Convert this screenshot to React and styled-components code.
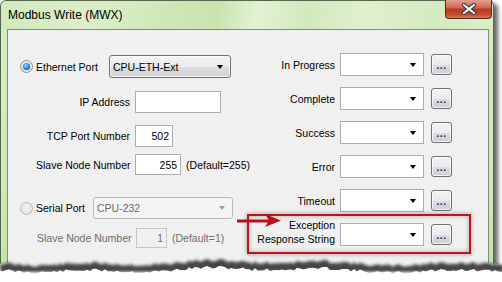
import React from 'react';
import styled, { createGlobalStyle } from 'styled-components';

const GlobalStyle = createGlobalStyle`
  html, body { margin: 0; padding: 0; background: #fff; }
  body { font-family: "Liberation Sans", Arial, sans-serif; font-size: 10.5px; color: #000; }
`;

const Page = styled.div`
  position: relative;
  width: 502px;
  height: 282px;
  overflow: hidden;
  background: #fff;
`;

const Window = styled.div`
  width: 494px;
  height: 276px;
  box-sizing: border-box;
  border: 1px solid #55664f;
  border-bottom: none;
  border-radius: 6px 6px 0 0;
  background: linear-gradient(to bottom, #d6ecc3 0%, #d2eabd 60%, #c4e3a4 100%);
  box-shadow: 4px 3px 4px rgba(0, 0, 0, 0.6);
  display: flex;
  flex-direction: column;
`;

const TitleBar = styled.div`
  height: 28px;
  display: flex;
  align-items: flex-start;
  padding-left: 7px;
  border-radius: 5px 5px 0 0;
  background: linear-gradient(100deg, #d2e9bc 0%, #dcefca 18%, #d0e8b9 32%, #c9e4af 44%,
    #e2f2d3 52%, #d2e9bc 62%, #dff0ce 74%, #d4eabf 88%, #dbeec9 100%);
`;

const Title = styled.div`
  font-size: 12px;
  line-height: 28px;
  color: #000;
`;

const CloseButton = styled.div`
  margin-left: auto;
  margin-right: 1px;
  margin-top: -1px;
  width: 47px;
  height: 19px;
  box-sizing: border-box;
  border: 1px solid #5b2a1e;
  border-top: none;
  border-radius: 0 0 4px 4px;
  background: linear-gradient(to bottom, #e3a08f 0%, #cf6a52 42%, #b8391f 52%, #c44a2e 80%, #d8785c 100%);
  display: flex;
  align-items: center;
  justify-content: center;
`;

const Frame = styled.div`
  flex: 1;
  display: flex;
  padding: 0 4px 0 6px;
`;

const Client = styled.div`
  flex: 1;
  border: 1px solid #7f8e7b;
  background: #f0f0f0;
`;

const Columns = styled.div`
  display: flex;
  padding-top: 23px;
`;

const LeftCol = styled.div`
  margin-left: 12px;
  width: 230px;
  display: flex;
  flex-direction: column;
`;

const RightCol = styled.div`
  display: flex;
  flex-direction: column;
  gap: 11px;
`;

const PortRow = styled.div`
  display: flex;
  align-items: center;
  margin-top: ${(p) => p.$mt}px;
  white-space: nowrap;
`;

const Radio = styled.span`
  width: 13px;
  height: 13px;
  box-sizing: border-box;
  border-radius: 50%;
  border: 1px solid ${(p) => (p.$disabled ? '#b8b8b8' : '#8a8f93')};
  background: ${(p) =>
    p.$disabled
      ? 'radial-gradient(circle at 50% 40%, #f4f4f4, #dcdcdc)'
      : 'radial-gradient(circle at 50% 40%, #ffffff, #d6dbe0)'};
  display: flex;
  align-items: center;
  justify-content: center;
  margin-right: 3px;
  &::after {
    content: '';
    display: ${(p) => (p.$checked ? 'block' : 'none')};
    width: 7px;
    height: 7px;
    border-radius: 50%;
    background: radial-gradient(circle at 40% 35%, #9fd8ff, #2d7bd0 55%, #144a8e);
    box-shadow: 0 0 1px #3a6fb0;
  }
`;

const PortLabel = styled.span`
  width: ${(p) => p.$w}px;
  color: ${(p) => (p.$disabled ? '#6d6d6d' : '#000')};
`;

const Select = styled.div`
  width: ${(p) => p.$w}px;
  height: ${(p) => p.$h}px;
  box-sizing: border-box;
  border: 1px solid ${(p) => (p.$disabled ? '#b9bcbf' : '#707070')};
  border-radius: 3px;
  background: ${(p) =>
    p.$disabled
      ? '#f4f4f4'
      : 'linear-gradient(to bottom, #f3f3f3 0%, #ebebeb 50%, #dddddd 51%, #d3d3d3 100%)'};
  display: flex;
  align-items: center;
  padding: 0 7px 0 3px;
  color: ${(p) => (p.$disabled ? '#6d6d6d' : '#000')};
  box-shadow: inset 0 0 0 1px ${(p) => (p.$disabled ? 'transparent' : 'rgba(255,255,255,0.7)')};
`;

const SelectText = styled.span`
  flex: 1;
`;

const Arrow = styled.span`
  width: 0;
  height: 0;
  border-left: 3.5px solid transparent;
  border-right: 3.5px solid transparent;
  border-top: 4px solid ${(p) => (p.$disabled ? '#a0a0a0' : '#000')};
`;

const FieldRow = styled.div`
  display: flex;
  align-items: center;
  margin-top: ${(p) => p.$mt}px;
  padding-left: ${(p) => (p.$disabled ? 17 : 16)}px;
  white-space: nowrap;
  color: ${(p) => (p.$disabled ? '#6d6d6d' : '#000')};
`;

const FieldLabel = styled.span`
  width: 94px;
  text-align: right;
  margin-right: 5px;
`;

const TextBox = styled.div`
  width: ${(p) => p.$w}px;
  height: ${(p) => p.$h}px;
  box-sizing: border-box;
  border: 1px solid ${(p) => (p.$disabled ? '#c6c6c6' : '#abadb3')};
  background: ${(p) => (p.$disabled ? '#f0f0f0' : '#fff')};
  display: flex;
  align-items: center;
  justify-content: flex-end;
  padding-right: 3px;
  margin-right: 5px;
`;

const ActionRow = styled.div`
  position: relative;
  display: flex;
  align-items: center;
  white-space: nowrap;
`;

const ActionLabel = styled.div`
  width: 85px;
  margin-right: 5px;
  display: flex;
  flex-direction: column;
  align-items: flex-end;
  line-height: 14px;
  margin-top: ${(p) => (p.$twoLine ? -6 : 0)}px;
`;

const Combo = styled.div`
  width: 84px;
  height: 23px;
  box-sizing: border-box;
  border: 1px solid #abadb3;
  background: #fff;
  display: flex;
  align-items: center;
  justify-content: flex-end;
  padding-right: 7px;
  margin-right: 7px;
`;

const DotsButton = styled.div`
  width: 21px;
  height: 21px;
  box-sizing: border-box;
  border: 1px solid #707070;
  border-radius: 3px;
  background: linear-gradient(to bottom, #f2f2f2 0%, #ebebeb 50%, #dddddd 51%, #cfcfcf 100%);
  box-shadow: inset 0 0 0 1px rgba(255, 255, 255, 0.75);
  display: flex;
  align-items: flex-end;
  justify-content: center;
  padding-bottom: 4px;
  font-size: 10px;
  line-height: 8px;
  letter-spacing: 0.5px;
  color: #1d1d6e;
  font-weight: bold;
`;

const Highlight = styled.div`
  position: absolute;
  left: -3px;
  top: -9px;
  width: 224px;
  height: 40px;
  box-sizing: border-box;
  border: 2px solid #c0121b;
  box-shadow: 0 0 5px rgba(0, 0, 0, 0.35), inset 0 0 5px rgba(0, 0, 0, 0.3);
  pointer-events: none;
`;

const Pointer = styled.svg`
  position: absolute;
  left: -13px;
  top: -10px;
`;

const Tear = styled.svg`
  position: absolute;
  left: 0;
  top: 248px;
`;

const tearPoints = (() => {
  let seed = 11;
  const rnd = () => {
    seed = (seed * 9301 + 49297) % 233280;
    return seed / 233280;
  };
  const pts = [];
  for (let x = 0; x <= 504; x += 3) {
    const y = 15 + Math.sin(x / 19) * 1.4 + Math.sin(x / 53) * 1.6 + (rnd() - 0.5) * 3.2;
    pts.push(`${x},${y.toFixed(1)}`);
  }
  return pts;
})();

const tearFill = `M0,0 L${tearPoints.join(' L')} L504,40 L0,40 Z`;
const tearShadow = `M${tearPoints.join(' L')} L504,24 L0,24 Z`;

const actions = ['In Progress', 'Complete', 'Success', 'Error', 'Timeout'];

const App = () => (
  <Page>
    <GlobalStyle />
    <Window>
      <TitleBar>
        <Title>Modbus Write (MWX)</Title>
        <CloseButton>
          <svg width="16" height="12" viewBox="0 0 16 12">
            <path d="M3 2 L13 10 M13 2 L3 10" stroke="#3a3a3a" strokeWidth="4.2" strokeLinecap="round" />
            <path d="M3 2 L13 10 M13 2 L3 10" stroke="#fff" strokeWidth="2.2" strokeLinecap="round" />
          </svg>
        </CloseButton>
      </TitleBar>
      <Frame>
        <Client>
          <Columns>
            <LeftCol>
              <PortRow $mt={2}>
                <Radio $checked />
                <PortLabel $w={73}>Ethernet Port</PortLabel>
                <Select $w={122} $h={23}>
                  <SelectText>CPU-ETH-Ext</SelectText>
                  <Arrow />
                </Select>
              </PortRow>
              <FieldRow $mt={13}>
                <FieldLabel>IP Address</FieldLabel>
                <TextBox $w={86} $h={22} />
              </FieldRow>
              <FieldRow $mt={12}>
                <FieldLabel>TCP Port Number</FieldLabel>
                <TextBox $w={38} $h={22}>502</TextBox>
              </FieldRow>
              <FieldRow $mt={7}>
                <FieldLabel>Slave Node Number</FieldLabel>
                <TextBox $w={69} $h={21}>255</TextBox>
                <span>(Default=255)</span>
              </FieldRow>
              <PortRow $mt={22}>
                <Radio $disabled />
                <PortLabel $w={57}>Serial Port</PortLabel>
                <Select $w={140} $h={22} $disabled>
                  <SelectText>CPU-232</SelectText>
                  <Arrow $disabled />
                </Select>
              </PortRow>
              <FieldRow $mt={9} $disabled>
                <FieldLabel>Slave Node Number</FieldLabel>
                <TextBox $w={31} $h={20} $disabled>1</TextBox>
                <span>(Default=1)</span>
              </FieldRow>
            </LeftCol>
            <RightCol>
              {actions.map((name) => (
                <ActionRow key={name}>
                  <ActionLabel>{name}</ActionLabel>
                  <Combo><Arrow /></Combo>
                  <DotsButton>...</DotsButton>
                </ActionRow>
              ))}
              <ActionRow>
                <Highlight />
                <Pointer width="48" height="16" viewBox="0 0 48 16">
                  <path d="M0 8 L34 8" stroke="#b3121a" strokeWidth="3" />
                  <path d="M28 1 L44 7.5 L28 14 L32 7.5 Z" fill="#b3121a" />
                </Pointer>
                <ActionLabel $twoLine>
                  <span>Exception</span>
                  <span>Response String</span>
                </ActionLabel>
                <Combo><Arrow /></Combo>
                <DotsButton>...</DotsButton>
              </ActionRow>
            </RightCol>
          </Columns>
        </Client>
      </Frame>
    </Window>
    <Tear width="502" height="34" viewBox="0 0 502 34">
      <defs>
        <filter id="tearBlur" x="-5%" y="-50%" width="110%" height="200%">
          <feGaussianBlur stdDeviation="1.6" />
        </filter>
      </defs>
      <path d={tearFill} fill="#fff" />
      <path d={tearShadow} fill="#333" opacity="0.9" filter="url(#tearBlur)" />
      <path d={tearFill} fill="#fff" transform="translate(0,7)" />
    </Tear>
  </Page>
);

export default App;
